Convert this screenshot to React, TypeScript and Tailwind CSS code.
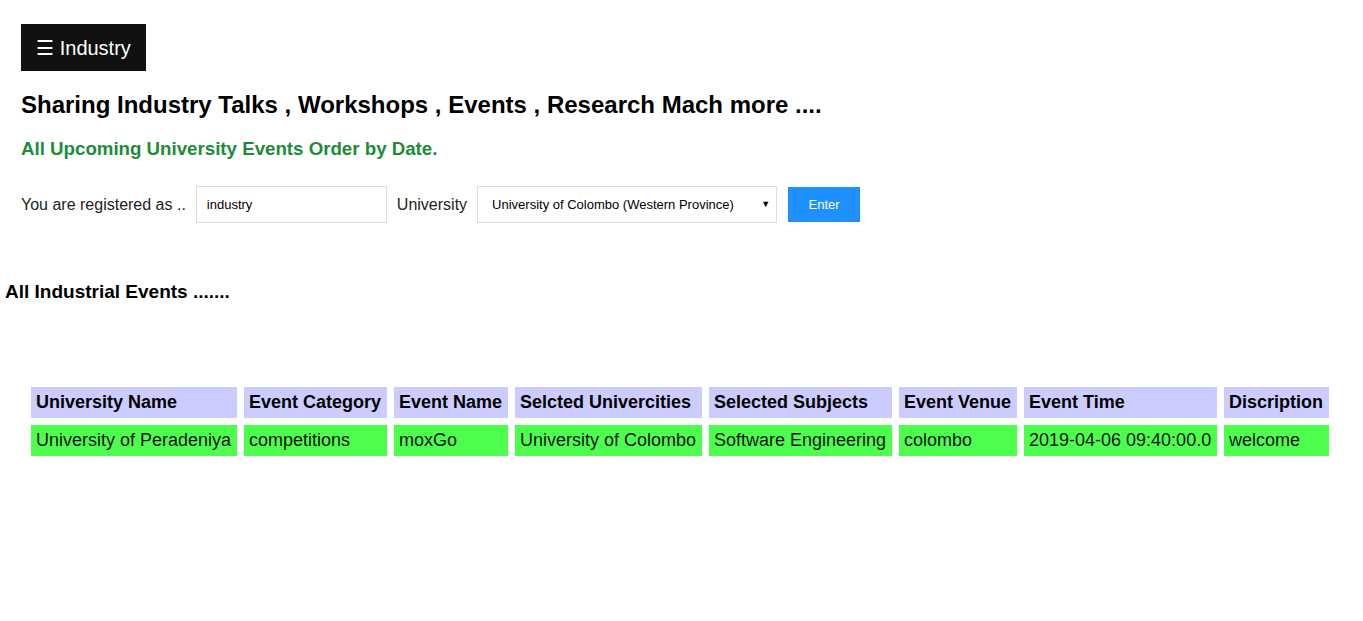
import React from "react";

const cols = [
  { h: "University Name", d: "University of Peradeniya", w: 206 },
  { h: "Event Category", d: "competitions", w: 143 },
  { h: "Event Name", d: "moxGo", w: 114 },
  { h: "Selcted Univercities", d: "University of Colombo", w: 187 },
  { h: "Selected Subjects", d: "Software Engineering", w: 183 },
  { h: "Event Venue", d: "colombo", w: 118 },
  { h: "Event Time", d: "2019-04-06 09:40:00.0", w: 193 },
  { h: "Discription", d: "welcome", w: 105 },
];

export default function App() {
  return (
    <div
      className="min-h-[621px] bg-white text-black"
      style={{ fontFamily: '"Liberation Sans", Arial, sans-serif' }}
    >
      <div className="px-[21px] pt-[24px]">
        <button className="flex h-[47px] w-[125px] items-center justify-center bg-[#111111] text-[20px] text-white">
          ☰ Industry
        </button>
        <h2 className="mt-[20px] text-[24px] font-bold leading-[28px]">
          Sharing Industry Talks , Workshops , Events , Research Mach more ....
        </h2>
        <h3 className="mt-[19px] text-[18.7px] font-bold leading-[22px] text-[#1c8c3a]">
          All Upcoming University Events Order by Date.
        </h3>
        <div className="mt-[26px] flex items-center text-[16px] text-[#222]">
          <span>You are registered as ..</span>
          <div className="ml-[10px] flex h-[37px] w-[191px] items-center border border-[#dddddd] pl-[10px] text-[13px] text-black">
            industry
          </div>
          <span className="ml-[10px]">University</span>
          <div className="ml-[10px] flex h-[37px] w-[300px] items-center justify-between border border-[#dddddd] pl-[14px] pr-[6px] text-[13px] text-black">
            <span>University of Colombo (Western Province)</span>
            <span className="text-[9px]">▼</span>
          </div>
          <button className="ml-[11px] flex h-[35px] w-[72px] items-center justify-center bg-[#1e90ff] text-[13px] text-white">
            Enter
          </button>
        </div>
      </div>
      <h3 className="ml-[5px] mt-[58px] text-[19px] font-bold leading-[22px]">
        All Industrial Events .......
      </h3>
      <table className="ml-[24px] mt-[77px] border-separate border-spacing-[7px] text-[18px]">
        <colgroup>
          {cols.map((c) => (
            <col key={c.h} style={{ width: c.w }} />
          ))}
        </colgroup>
        <thead>
          <tr>
            {cols.map((c) => (
              <th
                key={c.h}
                className="h-[31px] whitespace-nowrap bg-[#ccccff] px-[5px] py-0 text-left font-bold"
              >
                {c.h}
              </th>
            ))}
          </tr>
        </thead>
        <tbody>
          <tr>
            {cols.map((c) => (
              <td
                key={c.h}
                className="h-[31px] whitespace-nowrap bg-[#4dff4d] px-[5px] py-0 text-[#111]"
              >
                {c.d}
              </td>
            ))}
          </tr>
        </tbody>
      </table>
    </div>
  );
}
